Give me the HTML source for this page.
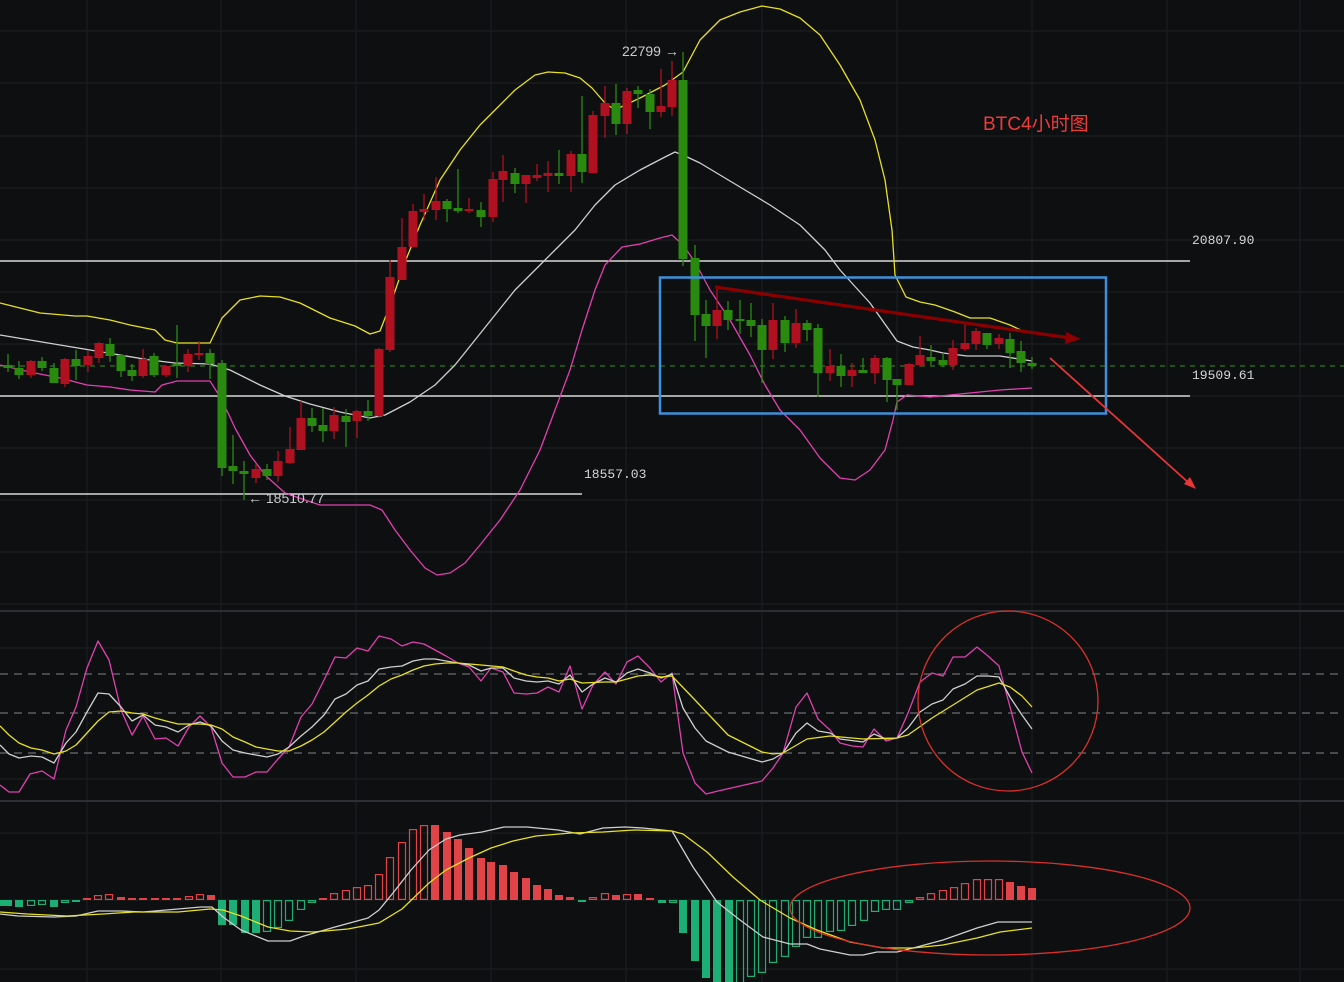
<!DOCTYPE html>
<html><head><meta charset="utf-8">
<style>
html,body{margin:0;padding:0;background:#0e0f11;}
svg{display:block;}
</style></head>
<body>
<svg id="c" width="1344" height="982" xmlns="http://www.w3.org/2000/svg" style="background:#0e0f11">
</svg>
<script>
var s='';
function L(x1,y1,x2,y2,c,w,extra){s+='<line x1="'+x1+'" y1="'+y1+'" x2="'+x2+'" y2="'+y2+'" stroke="'+c+'" stroke-width="'+w+'" '+(extra||'')+'/>';}
function P(pts,c,w){s+='<polyline fill="none" stroke="'+c+'" stroke-width="'+(w||1.3)+'" stroke-linejoin="round" points="'+pts.map(function(p){return p[0]+','+p[1]}).join(' ')+'"/>';}
// grid
var gx=[87,221,356,491,626,762,897,1032,1167,1300];
gx.forEach(function(x){L(x,0,x,982,'#1c1d21',1.2);});
[31,83,136,188,240,292,344,396,448,500,552,604,648,779,833,900,969].forEach(function(y){L(0,y,1344,y,'#1c1d21',1.2);});
// separators
L(0,611,1344,611,'#2c2e33',2);L(0,801,1344,801,'#2c2e33',2);
// KDJ dashed
[674,713,753].forEach(function(y){L(0,y,1344,y,'#6a6c70',1.2,'stroke-dasharray="8,6"');});
// main horizontal white lines
L(0,261,1190,261,'#d8d8d8',1.4);L(0,396,1190,396,'#d8d8d8',1.4);L(0,494,582,494,'#d8d8d8',1.4);
L(0,366,1344,366,'#2f7a1c',1.2,'stroke-dasharray="5,5"');
// Bollinger
P([[0,303],[20,308],[40,313],[75,316],[87,316],[110,320],[130,325],[155,330],[165,340],[177,343],[210,343],[222,318],[240,300],[260,296],[280,297],[300,303],[330,318],[355,326],[370,334],[380,331],[392,300],[405,262],[420,225],[440,180],[460,150],[480,125],[500,105],[515,90],[535,75],[548,72],[565,73],[580,78],[592,88],[605,103],[615,110],[625,105],[640,98],[665,85],[683,72],[700,40],[720,20],[740,12],[762,6],[780,9],[800,18],[820,35],[840,65],[860,100],[875,140],[885,180],[892,230],[895,275],[906,297],[920,302],[935,305],[955,312],[970,318],[990,318],[1010,325],[1025,332]],'#e8e020');
P([[0,335],[30,340],[60,345],[90,350],[120,355],[150,360],[175,363],[210,364],[230,370],[260,385],[285,396],[310,404],[340,412],[370,418],[385,415],[410,402],[435,385],[455,365],[475,340],[495,315],[515,290],[535,270],[555,250],[575,230],[595,205],[615,185],[640,170],[665,157],[675,152],[685,156],[700,163],[720,175],[745,190],[770,205],[800,225],[825,250],[840,270],[870,303],[897,341],[913,347],[930,350],[943,353],[967,356],[1000,356],[1032,361]],'#cfcfcf');
P([[0,365],[30,372],[60,378],[87,385],[110,387],[130,390],[155,392],[162,385],[177,381],[210,381],[222,400],[235,428],[250,455],[265,475],[285,493],[305,500],[320,505],[350,505],[370,505],[382,510],[395,530],[410,550],[425,568],[437,575],[450,573],[465,563],[480,545],[500,520],[520,490],[540,450],[555,410],[570,370],[582,330],[595,290],[605,265],[622,247],[640,244],[660,238],[672,235],[683,245],[695,262],[710,290],[730,320],[750,355],[765,385],[780,410],[800,430],[820,458],[840,478],[855,480],[870,470],[885,450],[893,420],[897,402],[907,395],[930,397],[950,395],[980,392],[1000,390],[1032,388]],'#e040b0');
// candles [x,top,bottom,high,low,color]
var R='#b0101f',G='#2a8a10';
var C=[[8,365,368,354,372,G],[19,368,375,361,379,G],[31,361,375,360,378,R],[42,361,368,357,371,G],[54,368,383,363,383,G],[65,359,384,358,387,R],[76,359,366,350,380,G],[88,356,365,351,372,R],[99,343,358,342,363,R],[110,344,356,338,362,G],[121,355,371,354,377,G],[132,370,376,364,381,G],[143,359,376,349,378,R],[154,356,375,353,377,G],[166,366,375,365,377,R],[177,364,366,325,378,G],[188,354,366,349,372,R],[199,353,355,341,360,R],[210,353,364,349,379,G],[222,363,468,360,476,G],[233,466,471,435,484,G],[244,471,474,461,500,G],[256,469,478,464,483,R],[267,469,476,464,480,G],[278,461,476,451,482,R],[290,449,463,427,464,R],[301,418,450,401,450,R],[312,418,426,408,432,G],[323,425,431,408,442,G],[334,415,431,407,439,R],[346,416,422,409,447,G],[357,411,421,410,438,R],[368,411,416,400,421,G],[379,349,416,348,418,R],[390,277,350,260,352,R],[402,247,280,218,280,R],[413,211,247,204,247,R],[424,209,212,194,220,R],[436,201,210,177,220,R],[447,201,209,199,222,G],[458,208,211,169,213,G],[469,209,211,198,213,R],[481,210,217,202,227,G],[493,179,217,172,222,R],[503,171,180,155,202,R],[515,173,184,168,193,G],[526,175,184,175,203,R],[537,175,178,164,181,R],[548,173,176,161,192,R],[559,173,176,150,184,G],[571,154,176,151,192,R],[582,154,172,96,183,G],[593,115,173,111,173,R],[605,103,116,86,138,R],[616,103,124,84,135,G],[627,91,124,88,134,R],[638,90,94,86,108,G],[650,94,112,89,129,G],[661,106,112,69,117,R],[672,80,107,61,116,R],[683,80,259,52,266,G],[695,258,315,245,341,G],[706,314,326,300,358,G],[717,310,326,286,339,R],[728,310,320,301,330,G],[740,319,321,300,334,G],[751,320,326,303,337,G],[762,325,350,319,383,G],[773,320,350,303,359,R],[785,320,343,316,352,G],[796,323,343,309,348,R],[807,323,330,320,341,G],[818,328,373,324,397,G],[830,366,373,349,381,R],[841,366,376,354,387,G],[852,370,376,363,387,R],[863,370,373,358,373,G],[875,358,373,355,384,R],[887,358,380,357,402,G],[897,379,385,379,410,G],[909,364,385,363,385,R],[920,355,365,336,367,R],[931,357,361,345,365,G],[943,360,365,353,367,G],[953,348,365,340,370,R],[965,343,349,323,351,R],[976,331,344,328,350,R],[987,333,345,333,349,G],[999,338,344,334,349,R],[1010,339,353,333,368,G],[1021,351,363,341,372,G],[1032,363,366,357,369,G]];
C.forEach(function(c){var x=c[0];L(x,c[3],x,c[4],c[5],1.3);var h=Math.max(2,c[2]-c[1]);s+='<rect x="'+(x-4.5)+'" y="'+c[1]+'" width="9" height="'+h+'" fill="'+c[5]+'"/>';});
// blue box
s+='<rect x="660" y="277.5" width="446" height="136" fill="none" stroke="#3d90dc" stroke-width="2.5"/>';
// dark red arrow
L(715,287,1070,338,'#8a0000',3.2);
s+='<polygon points="1081,339 1066,332 1065,344" fill="#8a0000"/>';
// red arrow
L(1050,358,1190,484,'#e83535',1.8);
s+='<polygon points="1196,489 1184,484 1190,477" fill="#e83535"/>';
// KDJ
P([[0,785],[9,792],[19,792],[30,774],[42,771],[54,779],[66,730],[76,707],[87,668],[98,641],[109,660],[121,710],[132,735],[143,716],[155,739],[166,738],[178,746],[189,727],[200,716],[211,727],[222,763],[233,777],[245,777],[256,772],[267,772],[278,759],[289,747],[301,717],[312,704],[324,680],[335,657],[346,658],[357,648],[368,651],[379,636],[391,639],[402,646],[413,642],[424,644],[435,650],[446,656],[458,663],[469,667],[481,681],[491,668],[503,672],[514,693],[526,694],[537,693],[548,687],[559,692],[570,666],[582,709],[593,685],[605,672],[616,684],[627,662],[638,656],[650,668],[661,682],[672,673],[683,753],[695,783],[706,794],[718,791],[762,781],[773,768],[783,753],[796,707],[807,693],[818,719],[830,730],[840,743],[852,746],[863,747],[874,729],[886,741],[897,738],[908,713],[920,682],[932,673],[943,676],[953,657],[965,657],[977,647],[988,656],[999,666],[1010,707],[1022,752],[1032,773]],'#e040b0');
P([[0,745],[9,754],[19,758],[31,756],[42,757],[54,763],[66,743],[76,732],[87,712],[98,693],[109,694],[121,707],[132,721],[143,715],[155,725],[166,727],[178,732],[189,725],[200,722],[211,726],[222,741],[233,750],[245,753],[256,755],[267,757],[278,754],[289,747],[301,736],[312,727],[324,715],[335,699],[346,694],[357,685],[368,681],[379,669],[391,667],[402,666],[413,661],[424,659],[435,659],[446,661],[458,663],[469,665],[481,671],[491,668],[503,668],[514,678],[526,681],[537,682],[548,681],[559,684],[570,675],[582,692],[593,684],[605,678],[616,682],[627,673],[638,669],[650,673],[661,678],[672,674],[683,708],[695,728],[706,741],[728,752],[762,762],[773,759],[783,753],[796,733],[807,723],[818,731],[830,733],[840,739],[863,742],[874,734],[886,739],[897,738],[908,728],[920,712],[932,704],[943,700],[953,689],[965,684],[977,676],[988,676],[999,677],[1010,697],[1022,715],[1032,729]],'#cfcfcf');
P([[0,726],[9,735],[19,743],[31,748],[42,750],[54,754],[66,751],[76,745],[87,733],[98,721],[109,712],[121,711],[132,713],[143,714],[155,718],[166,721],[178,724],[200,724],[211,725],[222,729],[233,737],[245,742],[256,747],[267,749],[278,751],[289,751],[301,746],[312,740],[324,732],[335,722],[346,712],[357,703],[368,695],[379,686],[391,679],[402,675],[413,670],[424,666],[435,664],[446,663],[458,663],[481,665],[503,667],[514,671],[526,675],[537,677],[548,678],[559,681],[570,679],[582,683],[605,682],[616,682],[627,679],[638,676],[650,675],[661,677],[672,676],[695,700],[728,735],[762,752],[773,754],[783,753],[807,739],[830,736],[863,739],[897,738],[908,735],[932,718],[953,705],[977,690],[999,683],[1010,687],[1022,696],[1032,707]],'#e8e020');
s+='<circle cx="1008" cy="701" r="90" fill="none" stroke="#d8302c" stroke-width="1.3"/>';
// MACD bars [x,h,color,hollow]
var r='#e04448',g='#1dae76';
var M=[[3,-6,g,0],[8,-6,g,0],[19,-7,g,0],[31,-6,g,1],[42,-5,g,1],[54,-7,g,0],[65,-3,g,1],[76,-2,g,0],[87,2,r,0],[98,5,r,1],[109,6,r,1],[121,3,r,0],[132,2,r,0],[143,2,r,0],[155,2,r,0],[166,2,r,0],[177,2,r,0],[189,4,r,1],[200,6,r,1],[211,5,r,0],[222,-25,g,0],[233,-25,g,0],[245,-33,g,0],[256,-33,g,0],[267,-32,g,1],[278,-28,g,1],[289,-21,g,1],[301,-10,g,1],[312,-3,g,1],[323,2,r,0],[334,7,r,1],[346,10,r,1],[357,13,r,1],[368,15,r,1],[379,26,r,1],[390,43,r,1],[402,58,r,1],[413,71,r,1],[424,75,r,1],[435,75,r,0],[447,68,r,0],[458,61,r,0],[469,52,r,0],[481,42,r,0],[491,38,r,0],[503,35,r,0],[514,28,r,0],[526,22,r,0],[537,15,r,0],[548,11,r,0],[559,5,r,0],[570,3,r,0],[582,-2,g,0],[593,3,r,1],[605,7,r,1],[616,5,r,0],[627,6,r,1],[638,6,r,0],[650,2,r,0],[662,-3,g,0],[673,-3,g,1],[683,-33,g,0],[695,-61,g,0],[706,-78,g,0],[717,-84,g,0],[729,-84,g,0],[740,-84,g,1],[751,-77,g,1],[762,-73,g,1],[773,-63,g,1],[785,-57,g,1],[796,-47,g,1],[807,-38,g,1],[818,-38,g,1],[830,-32,g,1],[841,-31,g,1],[852,-26,g,1],[864,-21,g,1],[875,-12,g,1],[886,-10,g,1],[897,-10,g,1],[909,-3,g,1],[920,3,r,1],[931,7,r,1],[943,10,r,1],[954,13,r,1],[965,17,r,1],[977,21,r,1],[988,21,r,1],[999,21,r,1],[1010,18,r,0],[1021,14,r,0],[1032,12,r,0]];
M.forEach(function(m){var y=m[1]>0?900-m[1]:900,h=Math.abs(m[1]);if(m[3]){s+='<rect x="'+(m[0]-3.5)+'" y="'+(y+0.6)+'" width="7" height="'+Math.max(1,h-1.2)+'" fill="none" stroke="'+m[2]+'" stroke-width="1.2"/>';}else{s+='<rect x="'+(m[0]-4)+'" y="'+y+'" width="8" height="'+h+'" fill="'+m[2]+'"/>';}});
P([[0,914],[18,916],[54,917],[76,916],[98,911],[121,911],[143,912],[178,909],[201,907],[212,907],[223,917],[241,930],[268,941],[290,941],[304,936],[335,927],[357,921],[368,918],[379,910],[393,893],[411,870],[429,850],[446,839],[460,835],[482,832],[504,827],[527,827],[558,830],[580,834],[603,828],[625,827],[643,828],[672,831],[693,867],[717,902],[740,920],[763,937],[790,944],[807,944],[820,949],[850,955],[863,955],[877,952],[897,952],[917,947],[943,940],[977,928],[998,922],[1032,922]],'#cfcfcf');
P([[0,912],[27,914],[67,916],[103,914],[134,912],[178,912],[210,909],[223,910],[241,916],[268,927],[290,931],[313,932],[348,929],[379,923],[402,909],[429,883],[446,870],[469,858],[491,848],[513,841],[536,836],[571,833],[603,832],[634,830],[672,831],[683,834],[707,852],[733,877],[760,900],[790,918],[817,930],[850,942],[883,948],[913,948],[943,945],[977,938],[1000,932],[1032,928]],'#e8e020');
s+='<ellipse cx="990" cy="908" rx="200" ry="47" fill="none" stroke="#d8302c" stroke-width="1.3"/>';
// labels
var mono='font-family="Liberation Mono, DejaVu Sans Mono, monospace" font-size="13" fill="#d4d6d8"';
var sans='font-family="Liberation Sans, DejaVu Sans, sans-serif" font-size="14" fill="#c8cacc"';
s+='<text x="1192" y="244" '+mono+'>20807.90</text>';
s+='<text x="1192" y="379" '+mono+'>19509.61</text>';
s+='<text x="584" y="478" '+mono+'>18557.03</text>';
s+='<text x="248" y="503" '+sans+'>← 18510.77</text>';
s+='<text x="622" y="56" '+sans+'>22799 →</text>';
s+='<text x="983" y="130" font-family="Liberation Sans, Noto Sans CJK SC, sans-serif" font-size="19" fill="#f03a3a">BTC4小时图</text>';
document.getElementById('c').innerHTML=s;
</script>
</body></html>
